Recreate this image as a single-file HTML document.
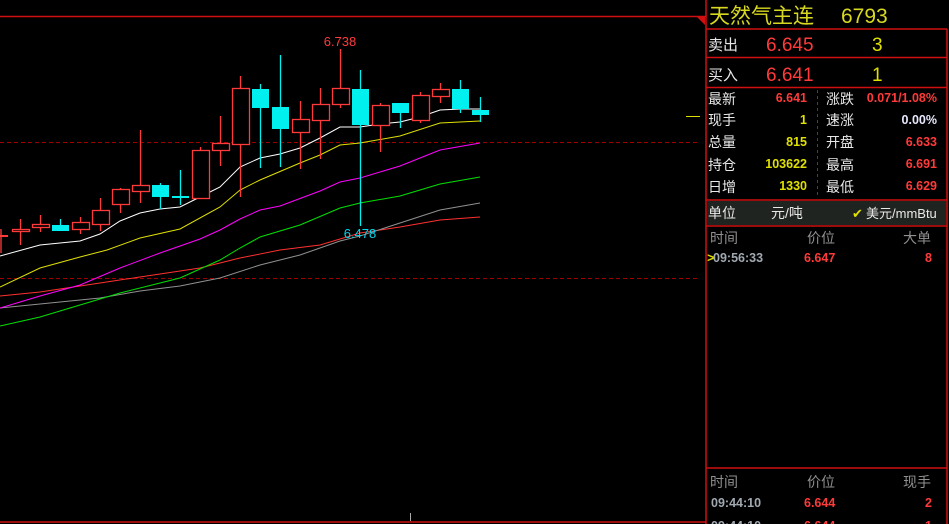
<!DOCTYPE html>
<html><head><meta charset="utf-8"><style>
html,body{margin:0;padding:0;background:#000;width:949px;height:524px;overflow:hidden;}
svg{position:absolute;left:0;top:0;}
.t{font-family:"Liberation Sans","Noto Sans CJK SC",sans-serif;}
</style></head><body>
<svg width="949" height="524" xmlns="http://www.w3.org/2000/svg" class="t">
<rect width="949" height="524" fill="#000"/>
<line x1="0" y1="16.5" x2="706" y2="16.5" stroke="#d01010" stroke-width="1.5"/>
<line x1="0" y1="522" x2="706" y2="522" stroke="#d01010" stroke-width="1.5"/>
<polygon points="696,16 705,16 705,25" fill="#d01010"/>
<line x1="410.5" y1="513" x2="410.5" y2="521" stroke="#aaa"/>
<line x1="686" y1="116.5" x2="700" y2="116.5" stroke="#e0e000"/>
<line x1="0" y1="142.5" x2="700" y2="142.5" stroke="#a00000" stroke-dasharray="4,3"/>
<line x1="0" y1="278.5" x2="700" y2="278.5" stroke="#a00000" stroke-dasharray="4,3"/>
<g fill="none" stroke-width="1">
<polyline stroke="#ff3030" points="0,296 40,292 100,283 140,277 200,268 240,258 280,250 320,245 360,233 400,227 440,220 480,217"/>
<polyline stroke="#909090" points="0,308 100,298 140,291 180,286 220,278 260,265 300,255 340,241 360,236 400,223 440,210 480,203"/>
<polyline stroke="#00e000" points="0,326 40,317 100,299 120,293 180,278 220,260 240,248 260,237 300,225 340,208 360,203 400,196 440,184 480,177"/>
<polyline stroke="#ff00ff" points="0,308 40,296 80,285 120,268 160,253 200,239 220,230 240,219 260,210 280,206 320,191 340,182 360,178 400,166 440,150 480,143"/>
<polyline stroke="#e0e000" points="0,287 40,268 80,257 107,250 140,238 180,229 220,207 240,190 260,180 300,163 320,155 340,145 360,143 400,136 440,123 480,121"/>
<polyline stroke="#ffffff" points="0,256 40,245 80,241 100,234 120,221 140,213 160,209 180,207 200,197 220,187 240,167 260,158 280,154 300,148 320,138 340,127 360,127 380,124 400,122 420,117 440,110 460,109 480,109"/>
</g>
<g stroke-width="1.3">
<g stroke="#ff3a3a" fill="none">
<line x1="0" y1="236" x2="8" y2="236" stroke-width="2"/><line x1="1" y1="229" x2="1" y2="253"/>
<line x1="20.5" y1="219" x2="20.5" y2="245"/><rect x="12.5" y="229.5" width="17" height="2" fill="#000"/>
<line x1="40.5" y1="215" x2="40.5" y2="232"/><rect x="32.5" y="224.5" width="17" height="3" fill="#000"/>
<line x1="80.5" y1="217" x2="80.5" y2="234"/><rect x="72.5" y="222.5" width="17" height="7" fill="#000"/>
<line x1="100.5" y1="198" x2="100.5" y2="231"/><rect x="92.5" y="210.5" width="17" height="14" fill="#000"/>
<line x1="120.5" y1="188" x2="120.5" y2="213"/><rect x="112.5" y="189.5" width="17" height="15" fill="#000"/>
<line x1="140.5" y1="130" x2="140.5" y2="203"/><rect x="132.5" y="185.5" width="17" height="6" fill="#000"/>
<line x1="200.5" y1="147" x2="200.5" y2="198"/><rect x="192.5" y="150.5" width="17" height="48" fill="#000"/>
<line x1="220.5" y1="116" x2="220.5" y2="166"/><rect x="212.5" y="143.5" width="17" height="7" fill="#000"/>
<line x1="240.5" y1="76" x2="240.5" y2="197"/><rect x="232.5" y="88.5" width="17" height="56" fill="#000"/>
<line x1="300.5" y1="101" x2="300.5" y2="169"/><rect x="292.5" y="119.5" width="17" height="13" fill="#000"/>
<line x1="320.5" y1="88" x2="320.5" y2="159"/><rect x="312.5" y="104.5" width="17" height="16" fill="#000"/>
<line x1="340.5" y1="49" x2="340.5" y2="108"/><rect x="332.5" y="88.5" width="17" height="16" fill="#000"/>
<line x1="380.5" y1="103" x2="380.5" y2="152"/><rect x="372.5" y="105.5" width="17" height="20" fill="#000"/>
<line x1="420.5" y1="92" x2="420.5" y2="123"/><rect x="412.5" y="95.5" width="17" height="25" fill="#000"/>
<line x1="440.5" y1="83" x2="440.5" y2="103"/><rect x="432.5" y="89.5" width="17" height="7" fill="#000"/>
</g>
<g stroke="#00f0f0" fill="#00f0f0">
<line x1="60.5" y1="219" x2="60.5" y2="226"/><rect x="52" y="225" width="17" height="6" stroke="none"/>
<line x1="160.5" y1="183" x2="160.5" y2="209"/><rect x="152" y="185" width="17" height="12" stroke="none"/>
<line x1="180.5" y1="170" x2="180.5" y2="205"/><rect x="172" y="196" width="17" height="2" stroke="none"/>
<line x1="260.5" y1="84" x2="260.5" y2="168"/><rect x="252" y="89" width="17" height="19" stroke="none"/>
<line x1="280.5" y1="55" x2="280.5" y2="167"/><rect x="272" y="107" width="17" height="22" stroke="none"/>
<line x1="360.5" y1="70" x2="360.5" y2="226"/><rect x="352" y="89" width="17" height="36" stroke="none"/>
<line x1="400.5" y1="103" x2="400.5" y2="128"/><rect x="392" y="103" width="17" height="10" stroke="none"/>
<line x1="460.5" y1="80" x2="460.5" y2="113"/><rect x="452" y="89" width="17" height="20" stroke="none"/>
<line x1="480.5" y1="97" x2="480.5" y2="122"/><rect x="472" y="110" width="17" height="5" stroke="none"/>
</g>
</g>
<text x="340" y="46" fill="#ff3a3a" font-size="13" text-anchor="middle">6.738</text>
<text x="360" y="238" fill="#00d8f0" font-size="13" text-anchor="middle">6.478</text>

<g stroke="#d01010" stroke-width="1.5" fill="none">
<line x1="706" y1="0" x2="706" y2="524"/>
<line x1="947" y1="29" x2="947" y2="524"/>
<line x1="706" y1="29" x2="947" y2="29"/>
<line x1="706" y1="57.5" x2="947" y2="57.5"/>
<line x1="706" y1="87.5" x2="947" y2="87.5"/>
<line x1="706" y1="200" x2="947" y2="200"/>
<line x1="706" y1="226" x2="947" y2="226"/>
<line x1="706" y1="468" x2="947" y2="468"/>
</g>
<line x1="817.5" y1="90" x2="817.5" y2="198" stroke="#c01010" stroke-dasharray="3,3"/>
<rect x="707" y="201" width="239" height="24" fill="#202420"/>
<text x="709" y="23" fill="#d8d820" font-size="21">天然气主连</text>
<text x="841" y="23" fill="#d8d820" font-size="21">6793</text>
<text x="708" y="50" fill="#e8e8e8" font-size="15">卖出</text>
<text x="766" y="51" fill="#ff3a3a" font-size="19">6.645</text>
<text x="872" y="51" fill="#e0e000" font-size="19">3</text>
<text x="708" y="80" fill="#e8e8e8" font-size="15">买入</text>
<text x="766" y="81" fill="#ff3a3a" font-size="19">6.641</text>
<text x="872" y="81" fill="#e0e000" font-size="19">1</text>
<g font-size="14" fill="#e8e8e8">
<text x="708" y="104">最新</text><text x="708" y="125">现手</text><text x="708" y="147">总量</text><text x="708" y="170">持仓</text><text x="708" y="192">日增</text>
<text x="826" y="104">涨跌</text><text x="826" y="125">速涨</text><text x="826" y="147">开盘</text><text x="826" y="170">最高</text><text x="826" y="192">最低</text>
</g>
<g font-size="12.5" font-weight="bold" text-anchor="end">
<text x="807" y="102" fill="#ff3a3a">6.641</text>
<text x="807" y="124" fill="#e0e000">1</text>
<text x="807" y="146" fill="#e0e000">815</text>
<text x="807" y="168" fill="#e0e000">103622</text>
<text x="807" y="190" fill="#e0e000">1330</text>
<text x="937" y="102" fill="#ff3a3a">0.071/1.08%</text>
<text x="937" y="124" fill="#e8e8ff">0.00%</text>
<text x="937" y="146" fill="#ff3a3a">6.633</text>
<text x="937" y="168" fill="#ff3a3a">6.691</text>
<text x="937" y="190" fill="#ff3a3a">6.629</text>
</g>
<text x="708" y="218" fill="#e8e8e8" font-size="14">单位</text>
<text x="771" y="218" fill="#e8e8e8" font-size="14">元/吨</text>
<text x="852" y="218" fill="#e0e000" font-size="13">✔</text>
<text x="866" y="218" fill="#e8e8e8" font-size="13">美元/mmBtu</text>
<g font-size="14" fill="#909090">
<text x="710" y="243">时间</text><text x="807" y="243">价位</text><text x="903" y="243">大单</text>
<text x="710" y="487">时间</text><text x="807" y="487">价位</text><text x="903" y="487">现手</text>
</g>
<g font-size="12.5" font-weight="bold">
<text x="707" y="262" fill="#e0e000">&gt;</text>
<text x="713" y="262" fill="#a0a8b0">09:56:33</text>
<text x="804" y="262" fill="#ff3a3a">6.647</text>
<text x="932" y="262" fill="#ff3a3a" text-anchor="end">8</text>
<text x="711" y="507" fill="#a0a8b0">09:44:10</text>
<text x="804" y="507" fill="#ff3a3a">6.644</text>
<text x="932" y="507" fill="#ff3a3a" text-anchor="end">2</text>
<text x="711" y="530" fill="#a0a8b0">09:44:10</text>
<text x="804" y="530" fill="#ff3a3a">6.644</text>
<text x="932" y="530" fill="#ff3a3a" text-anchor="end">1</text>
</g>
</svg>
</body></html>
